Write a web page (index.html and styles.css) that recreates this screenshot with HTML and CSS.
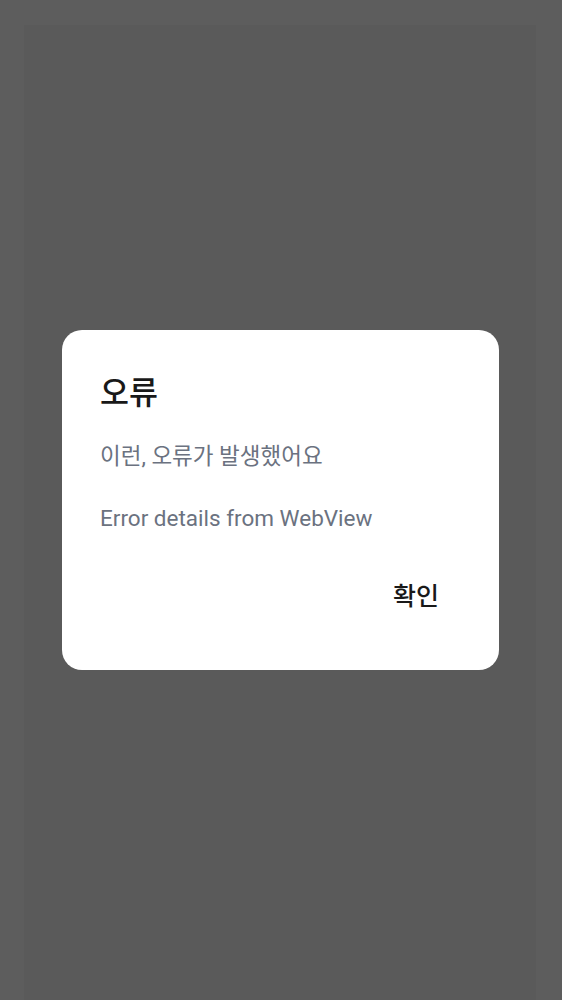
FILE: index.html
```html
<!DOCTYPE html>
<html lang="ko">
<head>
<meta charset="utf-8">
<title>오류</title>
<link rel="stylesheet" href="styles.css">
</head>
<body>
<div class="screen">
  <div class="dialog" role="alertdialog">
    <h2 class="title">오류</h2>
    <p class="message">이런, 오류가 발생했어요</p>
    <p class="detail">Error details from WebView</p>
    <div class="actions">
      <button class="confirm" type="button">확인</button>
    </div>
  </div>
</div>
</body>
</html>
```
FILE: styles.css
```css
html, body {
  margin: 0;
  padding: 0;
}
body {
  font-family: Roboto, "Noto Sans CJK KR", "Noto Sans", sans-serif;
  background: #5a5a5a;
}
.screen {
  height: 1000px;
  box-sizing: border-box;
  padding: 330px 0 0 62px;
  display: flex;
  align-items: flex-start;
  justify-content: flex-start;
  background: #5a5a5a;
  box-shadow: inset 24px 25px 0 #5d5d5d, inset -26px 0 0 #5d5d5d;
}
.dialog {
  width: 437px;
  box-sizing: border-box;
  background: #ffffff;
  border-radius: 20px;
  padding: 44px 38px 50px;
}
.title {
  margin: 0;
  font-size: 31.5px;
  line-height: 40px;
  font-weight: 500;
  color: #191919;
}
.message {
  margin: 26px 0 0;
  font-size: 22.5px;
  line-height: 32px;
  color: #6b7280;
}
.detail {
  margin: 30px 0 0;
  font-size: 22.5px;
  line-height: 32px;
  color: #6b7280;
}
.actions {
  display: flex;
  justify-content: flex-end;
  margin-top: 44px;
}
.confirm {
  font-family: inherit;
  font-size: 25px;
  line-height: 34px;
  font-weight: 500;
  color: #191919;
  background: transparent;
  border: none;
  padding: 2px 22px 6px;
  cursor: pointer;
}
```
